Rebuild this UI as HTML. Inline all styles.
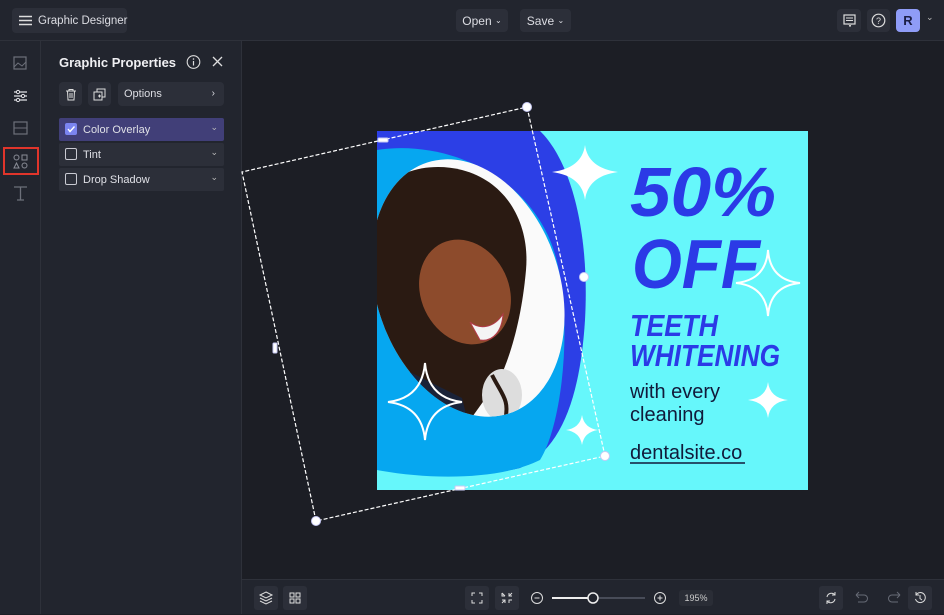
<!DOCTYPE html>
<html><head><meta charset="utf-8"><style>
*{margin:0;padding:0;box-sizing:border-box}
body{width:944px;height:614px;background:#1c1e25;font-family:"Liberation Sans",sans-serif;color:#e6e7ec;position:relative;overflow:hidden}
.top{position:absolute;left:0;top:0;width:944px;height:41px;background:#22252e;border-bottom:1px solid #2e313a}
.btn{position:absolute;background:#2c2f39;border-radius:4px;font-size:12px;color:#dcdde3;display:flex;align-items:center;justify-content:center;white-space:nowrap}
.rail{position:absolute;left:0;top:41px;width:41px;height:573px;background:#22252e;border-right:1px solid #2e313a}
.panel{position:absolute;left:41px;top:41px;width:201px;height:573px;background:#22252e;border-right:1px solid #2e313a}
.row{position:absolute;left:18px;width:165px;height:23px;background:#2c2f39;border-radius:2px;font-size:11px;display:flex;align-items:center;padding-left:24px;color:#dfe0e6}
.cb{position:absolute;left:6px;top:5px;width:12px;height:12px;border:1.3px solid #c9cad2;border-radius:2px}
.chev{position:absolute;right:6px;top:4px;font-size:9px;color:#bbb}
.bottom{position:absolute;left:242px;top:579px;width:702px;height:35px;background:#22252e;border-top:1px solid #2e313a}
.bb{position:absolute;top:6px;width:24px;height:24px;background:#2c2f39;border-radius:3px}
</style></head><body>
<div class="top">
 <div class="btn" style="left:12px;top:8px;width:115px;height:25px;justify-content:flex-start;padding-left:7px;font-size:11.5px">
  <svg width="13" height="11" style="margin-right:6px;flex:none"><path d="M0 1.5H13M0 5.5H13M0 9.5H13" stroke="#ddd" stroke-width="1.4"/></svg>Graphic Designer</div>
 <div class="btn" style="left:456px;top:9px;width:52px;height:23px">Open&nbsp;<span style="font-size:8px">⌄</span></div>
 <div class="btn" style="left:520px;top:9px;width:51px;height:23px">Save&nbsp;<span style="font-size:8px">⌄</span></div>
 <div class="btn" style="left:837px;top:9px;width:24px;height:23px"><svg width="13" height="13"><rect x="1" y="1" width="11" height="9" fill="none" stroke="#ddd" stroke-width="1.2"/><path d="M3 4H10M3 6.5H10M6 10L7 12.5L8 10" stroke="#ddd" stroke-width="1"/></svg></div>
 <div class="btn" style="left:867px;top:9px;width:23px;height:23px"><svg width="15" height="15"><circle cx="7.5" cy="7.5" r="6.3" fill="none" stroke="#ddd" stroke-width="1.2"/><text x="7.5" y="11" font-size="9" fill="#ddd" text-anchor="middle" font-family="Liberation Sans">?</text></svg></div>
 <div class="btn" style="left:896px;top:9px;width:24px;height:23px;background:#8f9cf7;color:#1c1e45;font-weight:bold;font-size:13px">R</div>
 <div style="position:absolute;left:926px;top:12px;font-size:9px;color:#bbb">⌄</div>
</div>
<div class="rail">
 <svg width="41" height="170" style="position:absolute;top:0;left:0">
  <rect x="14" y="16" width="12" height="12" fill="none" stroke="#6d707a" stroke-width="1.2"/><path d="M14 26L18 22L22 25L26 21" stroke="#6d707a" fill="none"/>
  <path d="M14 51H27M14 55H27M14 59H27" stroke="#e0e0e5" stroke-width="1.2"/><circle cx="18" cy="51" r="1.6" fill="#22252e" stroke="#e0e0e5"/><circle cx="23" cy="55" r="1.6" fill="#22252e" stroke="#e0e0e5"/><circle cx="18" cy="59" r="1.6" fill="#22252e" stroke="#e0e0e5"/>
  <rect x="14" y="81" width="13" height="12" fill="none" stroke="#6d707a" stroke-width="1.2"/><path d="M14 87H27" stroke="#6d707a"/>
  <rect x="4" y="107" width="34" height="26" fill="none" stroke="#e0352b" stroke-width="2"/>
  <rect x="14" y="114" width="5" height="5" rx="2.5" fill="none" stroke="#8a8d97"/><rect x="22" y="114" width="5" height="5" fill="none" stroke="#8a8d97"/><path d="M14 127L16.5 122L19 127Z" fill="none" stroke="#8a8d97"/><circle cx="24.5" cy="124.5" r="2.5" fill="none" stroke="#8a8d97"/>
  <path d="M14 146H27M20.5 146V159M17 159H24" stroke="#6d707a" stroke-width="1.3"/>
 </svg>
</div>
<div class="panel">
 <div style="position:absolute;left:18px;top:14px;font-size:13px;font-weight:bold;color:#f0f0f3">Graphic Properties</div>
 <svg width="40" height="16" style="position:absolute;left:145px;top:13px"><circle cx="7.5" cy="8" r="6.3" fill="none" stroke="#ddd" stroke-width="1.1"/><path d="M7.5 7V11.5" stroke="#ddd" stroke-width="1.2"/><circle cx="7.5" cy="5" r=".8" fill="#ddd"/><path d="M27 3L36 12M36 3L27 12" stroke="#ddd" stroke-width="1.3"/></svg>
 <div class="btn" style="left:18px;top:41px;width:23px;height:24px"><svg width="12" height="13"><path d="M1 3H11M4 3V1.5H8V3M2.5 3L3 12H9L9.5 3M5 5V10M7 5V10" stroke="#ddd" fill="none"/></svg></div>
 <div class="btn" style="left:47px;top:41px;width:23px;height:24px"><svg width="13" height="13"><rect x="1" y="4" width="8" height="8" fill="none" stroke="#ddd"/><path d="M4 4V1H12V9H9M5 8H8M6.5 6.5V9.5" stroke="#ddd" fill="none"/></svg></div>
 <div class="btn" style="left:77px;top:41px;width:106px;height:24px;justify-content:flex-start;padding-left:6px;font-size:11px;line-height:24px">Options<span style="position:absolute;right:9px;top:0;font-size:10px">›</span></div>
 <div class="row" style="top:77px;background:#413f78"><div class="cb" style="background:#7b84f0;border-color:#7b84f0"><svg width="10" height="10" style="position:absolute;left:0;top:0"><path d="M2 5L4 7.5L8.5 2.5" stroke="#fff" stroke-width="1.4" fill="none"/></svg></div>Color Overlay<span class="chev">⌄</span></div>
 <div class="row" style="top:102px"><div class="cb"></div>Tint<span class="chev">⌄</span></div>
 <div class="row" style="top:127px"><div class="cb"></div>Drop Shadow<span class="chev">⌄</span></div>
</div>

<svg width="944" height="614" style="position:absolute;left:0;top:0">
 <defs><clipPath id="c"><rect x="377" y="131" width="431" height="359"/></clipPath>
 <clipPath id="ov"><ellipse cx="468" cy="288" rx="92" ry="132" transform="rotate(-18 468 288)"/></clipPath></defs>
 <g clip-path="url(#c)">
  <rect x="377" y="131" width="431" height="359" fill="#66f7fb"/>
  <path d="M377 131H540C570 160 590 230 585 320C580 400 560 450 520 468C470 480 420 475 377 460Z" fill="#2c3fe6"/>
  <path d="M377 150C440 140 520 170 550 240C575 300 565 420 540 460C500 480 430 480 377 470Z" fill="#06a7f0"/>
  <ellipse cx="468" cy="288" rx="92" ry="132" transform="rotate(-18 468 288)" fill="#fafafa"/>
  <g clip-path="url(#ov)">
   <path d="M377 195C395 170 430 162 462 170C508 182 530 225 526 270C522 315 512 352 500 378L470 420L377 430Z" fill="#2a1a12"/>
   <ellipse cx="465" cy="292" rx="44" ry="54" transform="rotate(-25 465 292)" fill="#8d4b2c"/>
   <path d="M470 322C480 330 494 328 503 314C502 330 494 342 480 340Z" fill="#f4f4f4" stroke="#b33a4a"/>
   <path d="M410 372L462 398L470 430L395 430Z" fill="#1a2238"/>
   <ellipse cx="502" cy="395" rx="20" ry="26" fill="#ddd"/>
   <path d="M492 375C502 395 510 400 505 420" stroke="#2a1a12" stroke-width="4" fill="none"/>
  </g>
  <g fill="#fff">
   <path d="M585 145Q588 168 618 172Q588 176 585 200Q582 176 552 172Q582 168 585 145Z"/>
   <path d="M768 250Q770 280 800 283Q770 286 768 316Q766 286 736 283Q766 280 768 250Z" fill="none" stroke="#fff" stroke-width="2"/>
   <path d="M425 363Q428 398 462 402Q428 406 425 440Q422 406 388 402Q422 398 425 363Z" fill="none" stroke="#fff" stroke-width="2"/>
   <path d="M768 382Q770 398 788 400Q770 402 768 418Q766 402 748 400Q766 398 768 382Z"/>
   <path d="M582 415Q584 428 598 430Q584 432 582 445Q580 432 566 430Q580 428 582 415Z"/>
  </g>
  <g fill="#2b3ae6" font-family="Liberation Sans" font-weight="bold" font-style="italic">
   <text x="630" y="216" font-size="70" textLength="146" lengthAdjust="spacingAndGlyphs">50%</text>
   <text x="632" y="288" font-size="70" textLength="128" lengthAdjust="spacingAndGlyphs">OFF</text>
   <text x="630" y="336" font-size="31" textLength="88" lengthAdjust="spacingAndGlyphs">TEETH</text>
   <text x="630" y="366" font-size="31" textLength="150" lengthAdjust="spacingAndGlyphs">WHITENING</text>
  </g>
  <g fill="#111a3a" font-family="Liberation Sans" font-size="20">
   <text x="630" y="398">with every</text>
   <text x="630" y="421">cleaning</text>
   <text x="630" y="459">dentalsite.co</text>
  </g>
  <path d="M630 463H745" stroke="#111a3a" stroke-width="1.5"/>
 </g>
 <g stroke="#fff" stroke-width="1.2" stroke-dasharray="4 2" fill="none">
  <path d="M527 107L605 456L316 521L242 172Z"/>
 </g>
 <g fill="#fff" stroke="#c7c9f5"><circle cx="527" cy="107" r="4.5"/><circle cx="605" cy="456" r="4.5"/><circle cx="316" cy="521" r="4.5"/><circle cx="584" cy="277" r="4.5"/>
 <rect x="378" y="138" width="10" height="4" rx="1"/><rect x="455" y="486" width="10" height="4" rx="1"/><rect x="273" y="343" width="4" height="10" rx="1"/></g>
</svg>

<div class="bottom">
 <div class="bb" style="left:12px"><svg width="24" height="24"><path d="M12 6L18 9L12 12L6 9Z M6 12L12 15L18 12M6 15L12 18L18 15" stroke="#ddd" fill="none"/></svg></div>
 <div class="bb" style="left:41px"><svg width="24" height="24"><rect x="7" y="7" width="4" height="4" fill="none" stroke="#ddd"/><rect x="13" y="7" width="4" height="4" fill="none" stroke="#ddd"/><rect x="7" y="13" width="4" height="4" fill="none" stroke="#ddd"/><rect x="13" y="13" width="4" height="4" fill="none" stroke="#ddd"/></svg></div>
 <div class="bb" style="left:223px"><svg width="24" height="24"><path d="M7 10V7H10M14 7H17V10M17 14V17H14M10 17H7V14" stroke="#ddd" fill="none"/></svg></div>
 <div class="bb" style="left:253px"><svg width="24" height="24"><path d="M7 7V10H10M7 7L10 10M17 7L14 10M14 7V10H17M7 17L10 14M7 14H10V17M14 17V14H17" stroke="#ddd" fill="none"/></svg></div>
 <svg width="140" height="24" style="position:absolute;left:288px;top:6px"><circle cx="7" cy="12" r="5.5" stroke="#ddd" fill="none"/><path d="M4.5 12H9.5" stroke="#ddd"/><path d="M22 12H63" stroke="#eee" stroke-width="2"/><path d="M63 12H115" stroke="#555a66" stroke-width="1.5"/><circle cx="63" cy="12" r="5" fill="#22252e" stroke="#eee" stroke-width="1.5"/><circle cx="130" cy="12" r="5.5" stroke="#ddd" fill="none"/><path d="M127.5 12H132.5M130 9.5V14.5" stroke="#ddd"/></svg>
 <div style="position:absolute;left:437px;top:10px;width:34px;height:16px;background:#2a2d36;border-radius:3px;font-size:9px;color:#ccc;text-align:center;line-height:16px">195%</div>
 <div class="bb" style="left:577px"><svg width="24" height="24"><path d="M8 11A4.5 4.5 0 0 1 16 9M16 13A4.5 4.5 0 0 1 8 15M16 6V9H13M8 18V15H11" stroke="#ddd" fill="none"/></svg></div>
 <svg width="60" height="24" style="position:absolute;left:606px;top:6px"><path d="M8 9H16A3 3 0 0 1 16 16H10M8 9L11 6M8 9L11 12" stroke="#666a75" fill="none"/><path d="M52 9H44A3 3 0 0 0 44 16H50M52 9L49 6M52 9L49 12" stroke="#666a75" fill="none"/></svg>
 <div class="bb" style="left:666px"><svg width="24" height="24"><path d="M8 9A5 5 0 1 1 7.5 13M8 6V9H11M12 9V12.5L14 14" stroke="#ddd" fill="none"/></svg></div>
</div>
</body></html>
